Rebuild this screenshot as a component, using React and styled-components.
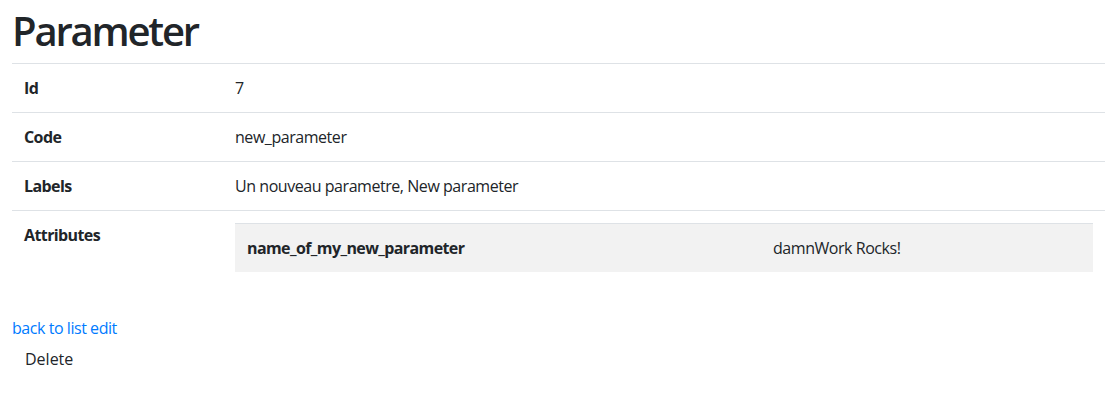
import React from 'react'
import styled, { createGlobalStyle } from 'styled-components'

const GlobalStyle = createGlobalStyle`
  body {
    margin: 0;
    font-family: "Open Sans", "Noto Sans", sans-serif;
    font-size: 16px;
    line-height: 1.5;
    letter-spacing: -0.45px;
    color: #212529;
    background: #fff;
  }
`

const Page = styled.div`
  padding: 7px 4px 0 12px;
`

const Title = styled.h1`
  margin: 0 0 8px;
  font-size: 40px;
  font-weight: 600;
  line-height: 1.2;
  letter-spacing: -2.2px;
`

const Table = styled.table`
  width: 100%;
  border-collapse: collapse;
  margin-bottom: 32px;
`

const Row = styled.tr``

const Head = styled.th`
  width: ${p => p.$width || 'auto'};
  padding: 12px;
  text-align: left;
  vertical-align: top;
  font-weight: 700;
  letter-spacing: -0.6px;
  border-top: 1px solid #dee2e6;
`

const Cell = styled.td`
  padding: 12px;
  vertical-align: top;
  border-top: 1px solid #dee2e6;
`

const InnerTable = styled.table`
  width: 100%;
  border-collapse: collapse;
  background: #f2f2f2;
`

const Link = styled.a`
  display: block;
  color: #007bff;
  text-decoration: none;
`

const Button = styled.button`
  display: block;
  padding: 6px 12px;
  border: 1px solid transparent;
  background: none;
  font: inherit;
  color: #212529;
  cursor: pointer;
`

const App = () => {
  return (
    <Page>
      <GlobalStyle />
      <Title>Parameter</Title>
      <Table>
        <tbody>
          <Row>
            <Head $width="187px">Id</Head>
            <Cell>7</Cell>
          </Row>
          <Row>
            <Head>Code</Head>
            <Cell>new_parameter</Cell>
          </Row>
          <Row>
            <Head>Labels</Head>
            <Cell>Un nouveau parametre, New parameter</Cell>
          </Row>
          <Row>
            <Head>Attributes</Head>
            <Cell>
              <InnerTable>
                <tbody>
                  <Row>
                    <Head $width="502px">name_of_my_new_parameter</Head>
                    <Cell>damnWork Rocks!</Cell>
                  </Row>
                </tbody>
              </InnerTable>
            </Cell>
          </Row>
        </tbody>
      </Table>
      <Link href="#">back to list edit</Link>
      <Button>Delete</Button>
    </Page>
  )
}

export default App
